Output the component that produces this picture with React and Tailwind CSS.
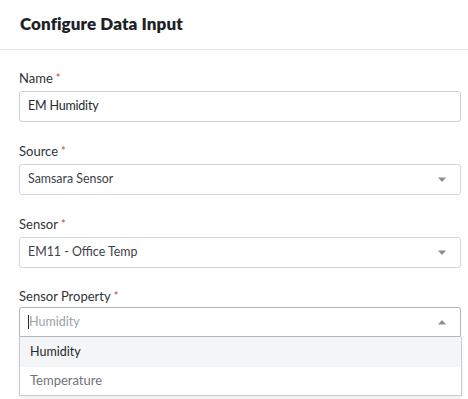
import React from 'react'

function Caret({ up }) {
  return (
    <svg width="10" height="6" viewBox="0 0 10 6" className="shrink-0">
      {up ? <path d="M1 5.5 L5 1 L9 5.5 Z" fill="#8c8c8c" /> : <path d="M1 0.5 L5 5 L9 0.5 Z" fill="#8c8c8c" />}
    </svg>
  )
}

function Label({ children }) {
  return (
    <label className="block h-4 text-[13px] leading-4 text-[#2f3338] mb-[5px]">
      {children}
      <span className="text-[#c2413b] text-[11px] ml-[3px] align-top">*</span>
    </label>
  )
}

function Select({ value }) {
  return (
    <div className="flex items-center h-[31px] border border-[#d3d6db] rounded-[3px] pl-2 pr-[13px] bg-white">
      <span className="flex-1 text-[12.4px] text-[#3d4247]">{value}</span>
      <Caret />
    </div>
  )
}

export default function App() {
  return (
    <div className="w-[468px] h-[399px] bg-white overflow-hidden" style={{ fontFamily: 'Lato, "Open Sans", sans-serif' }}>
      <div className="h-[50px] border-b border-[#e6e8eb] px-5 flex items-center">
        <h1 className="text-[17px] font-extrabold tracking-[0.1px] text-[#1e2226] -mt-[2px]">Configure Data Input</h1>
      </div>
      <div className="pt-5 pl-[19px] pr-[7px] flex flex-col gap-[21px]">
        <div>
          <Label>Name</Label>
          <div className="flex items-center h-[31px] border border-[#cdd1d6] rounded-[3px] px-2 bg-white">
            <span className="text-[12.5px] tracking-[-0.2px] text-[#24282c]">EM Humidity</span>
          </div>
        </div>
        <div>
          <Label>Source</Label>
          <Select value="Samsara Sensor" />
        </div>
        <div>
          <Label>Sensor</Label>
          <Select value="EM11 - Office Temp" />
        </div>
        <div className="-mt-[1px]">
          <Label>Sensor Property</Label>
          <div className="relative -mt-[2px]">
            <div className="flex items-center h-[30px] border border-[#b3b7bc] rounded-t-[3px] pl-2 pr-[13px] bg-white">
              <span className="w-px h-[14px] bg-[#2a2a2a]" />
              <span className="flex-1 text-[12.5px] text-[#9aa1a8]">Humidity</span>
              <Caret up />
            </div>
            <div className="border border-t-0 border-[#c9ccd0] -mr-px bg-white shadow-[0_2px_3px_rgba(0,0,0,0.08)]">
              <div className="h-[30px] flex items-center px-[10px] bg-[#f4f5f7] text-[12.5px] text-[#24282c]">Humidity</div>
              <div className="h-[28px] flex items-center px-[10px] text-[13px] text-[#6e737a]">Temperature</div>
            </div>
          </div>
        </div>
      </div>
    </div>
  )
}
